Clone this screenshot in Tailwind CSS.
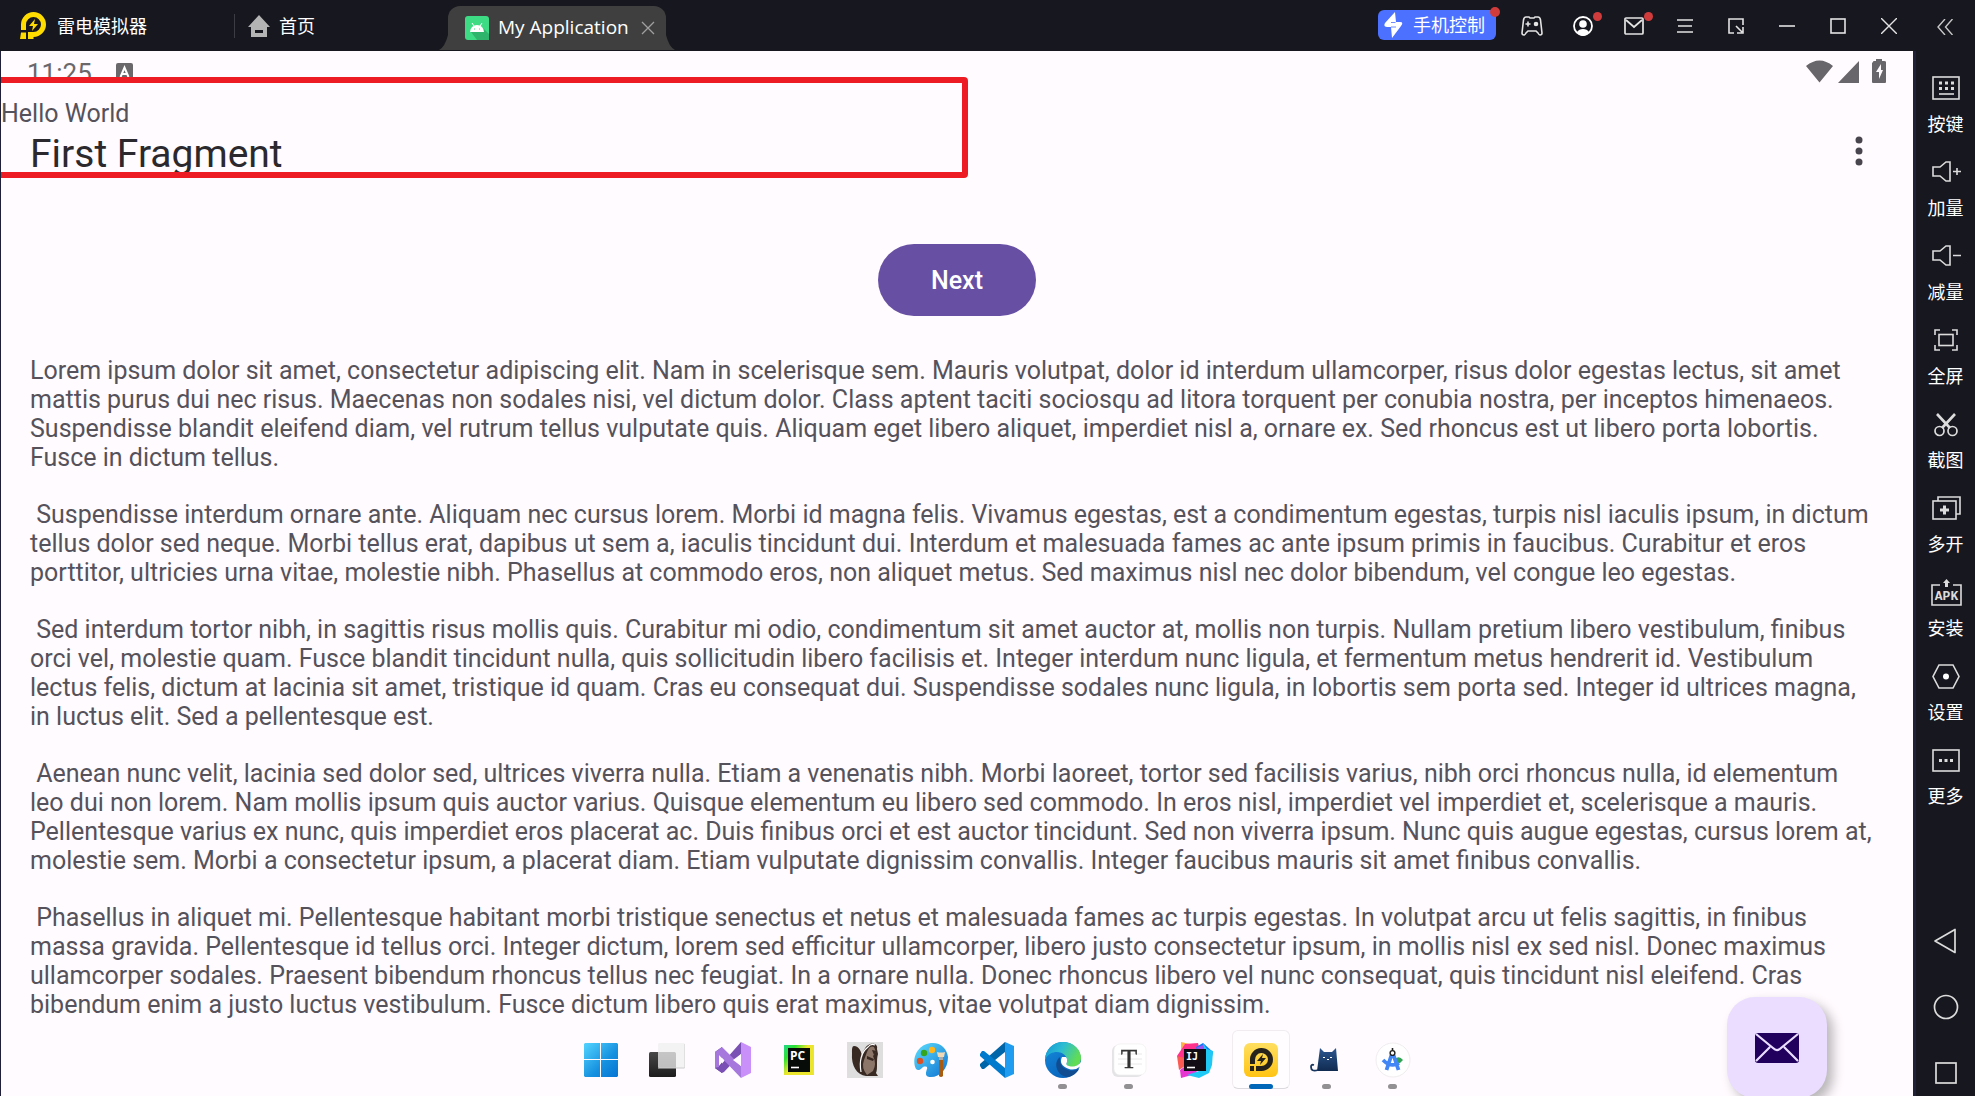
<!DOCTYPE html>
<html lang="zh-CN">
<head>
<meta charset="utf-8">
<title>My Application</title>
<script src="https://cdn.jsdelivr.net/npm/@tailwindcss/browser@4"></script>
</head>
<body class="flex h-screen flex-col overflow-hidden bg-[#17171f] font-['Open_Sans','Noto_Sans_CJK_SC',sans-serif] text-white">

<!-- Window title bar -->
<header class="flex h-[51px] shrink-0 items-center">
  <div class="flex w-[234px] items-center gap-[9px] pl-5">
    <svg class="h-7 w-7" viewBox="0 0 28 28"><path fill="#ffdc00" fill-rule="evenodd" d="M1 18V12.500a12.500 12.500 0 1 1 12.500 12.500V27H8v-7h5.500a7.500 7.500 0 1 0-7.500-7.500V18zM1 20.500h5V27H0z"/><path fill="#ffdc00" d="M15 7l-6 7h4l-1 5 6-7h-4z"/></svg>
    <span class="text-lg">雷电模拟器</span>
  </div>
  <a href="#" class="flex h-6 w-[205px] items-center gap-[9px] border-l border-[#3c3c44] pl-[13px]">
    <svg class="h-[22px] w-[22px]" viewBox="0 0 22 22" fill="#b4b4b4"><path d="M11 0l11 12h-3v10H3V12H0zM7 15v3h8v-3z" fill-rule="evenodd"/></svg>
    <span class="text-lg">首页</span>
  </a>
  <div class="flex h-[45px] items-center self-end">
    <svg class="h-full w-[9px]" viewBox="0 0 9 45"><path fill="#3f3f3f" d="M9 29v15H0q6-3 9-15z"/></svg>
    <div class="flex h-[44px] w-[218px] items-center self-start rounded-t-xl bg-[#3f3f3f] pb-px pl-[17px]">
      <svg class="h-6 w-6" viewBox="0 0 24 24"><rect width="24" height="24" rx="3" fill="#3ddc84"/><path d="M18 12l6 6v6H12l-6-8z" fill="#2fb56b"/><path d="M5 16a7 7 0 0 1 14 0z" fill="#fff"/><path d="M7 7l2 3M17 7l-2 3" stroke="#fff"/><path d="M9 13h1M14 13h1" stroke="#3ddc84"/></svg>
      <span class="ml-[9px] w-[143px] whitespace-nowrap text-[19px]">My Application</span>
      <button aria-label="关闭标签"><svg class="h-[14px] w-[14px]" viewBox="0 0 14 14"><path d="M1 1l12 12M13 1L1 13" stroke="#a0a0a0" stroke-width="1.3"/></svg></button>
    </div>
    <svg class="h-full w-[9px]" viewBox="0 0 9 45"><path fill="#3f3f3f" d="M0 29v15h9q-6-3-9-15z"/></svg>
  </div>

  <div class="ml-auto flex h-full items-center">
    <button class="relative -mt-px mr-[10px] flex h-[30px] w-[118px] items-center gap-[10px] rounded-md bg-[#4c70ff] pl-[6px]">
      <svg class="h-7 w-[19px]" viewBox="0 0 19 28" fill="#fff"><path d="M11 1L1 12q-2 4 2 4h4l1 11 9-12q3-4-1-4h-4z"/><path d="M7 11.500h4.500M7 16h5" stroke="#4c70ff" stroke-width=".8"/></svg>
      <span class="text-lg">手机控制</span>
      <span class="absolute -right-1 -top-[3px] h-[10px] w-[10px] rounded-full bg-[#d03c3c]"></span>
    </button>
    <button aria-label="手柄" class="grid h-full w-[51px] place-items-center">
      <svg class="h-[22px] w-[22px]" viewBox="0 0 22 22" fill="none" stroke="#e4e4e4" stroke-width="1.6"><path d="M5 2h3l1 1h4l1-1h3q2 0 2.500 3l1.500 13q0 2-2 2-1 0-2-2l-2-2H7l-2 2q-1 2-2 2-2 0-2-2L2.500 5Q3 2 5 2z"/><path d="M4.500 9h5M7 6.500v5"/><circle cx="15" cy="9" r="1.500" fill="#e4e4e4"/></svg>
    </button>
    <button aria-label="账户" class="relative grid h-full w-[51px] place-items-center">
      <svg class="h-[22px] w-[22px]" viewBox="0 0 22 22"><circle cx="11" cy="11" r="9" fill="none" stroke="#fff" stroke-width="1.800"/><circle cx="11" cy="9" r="3.800" fill="#fff"/><path d="M5 17q2-3 6-3t6 3q-2 4-6 4t-6-4z" fill="#fff"/></svg>
      <span class="absolute right-[6px] top-3 h-[9px] w-[9px] rounded-full bg-[#d03c3c]"></span>
    </button>
    <button aria-label="消息" class="relative grid h-full w-[51px] place-items-center">
      <svg class="h-5 w-5" viewBox="0 0 20 20" fill="none" stroke="#e4e4e4" stroke-width="1.700"><rect x="1" y="2" width="18" height="16" rx="1"/><path d="M2 4l8 7 8-7"/></svg>
      <span class="absolute right-[6px] top-3 h-[9px] w-[9px] rounded-full bg-[#d03c3c]"></span>
    </button>
    <button aria-label="菜单" class="grid h-full w-[51px] place-items-center"><svg class="h-4 w-4" viewBox="0 0 16 16" stroke="#e4e4e4" stroke-width="1.500"><path d="M0 2h16M1 8h14M0 14h16"/></svg></button>
    <button aria-label="小窗" class="grid h-full w-[51px] place-items-center"><svg class="h-[18px] w-[18px]" viewBox="0 0 18 18" fill="none" stroke="#e4e4e4" stroke-width="1.600"><path d="M7 16H2V2h14v6M9 9l6 6M16 10v6h-6"/></svg></button>
    <button aria-label="最小化" class="grid h-full w-[51px] place-items-center"><svg class="h-4 w-4" viewBox="0 0 16 16" stroke="#e4e4e4" stroke-width="1.600"><path d="M0 8h16"/></svg></button>
    <button aria-label="最大化" class="grid h-full w-[51px] place-items-center"><svg class="h-4 w-4" viewBox="0 0 16 16" fill="none" stroke="#e4e4e4" stroke-width="1.600"><rect x="1" y="1" width="14" height="14"/></svg></button>
    <button aria-label="关闭" class="grid h-full w-[51px] place-items-center"><svg class="h-4 w-4" viewBox="0 0 16 16" stroke="#e4e4e4" stroke-width="1.400"><path d="M0 0l16 16M16 0L0 16"/></svg></button>
    <button aria-label="收起侧栏" class="grid h-full w-[61px] place-items-center"><svg class="mt-[2px] h-4 w-4" viewBox="0 0 16 16" fill="none" stroke="#c8c8c8" stroke-width="1.400"><path d="M8 0L1 8l7 8M15.500 0l-7 8 7 8"/></svg></button>
  </div>
</header>

<div class="flex min-h-0 flex-1">
  <!-- Android screen -->
  <main class="relative min-w-0 flex-1 overflow-hidden border-l border-[#1f1f3a] bg-[#fffbfe] font-['Roboto',sans-serif] text-[#55525b]">
    <div class="flex h-8 items-start justify-between overflow-hidden pl-[26px] pr-[26px] pt-2">
      <div class="flex gap-[24px] text-[#6b686c]">
        <span class="text-[26px] leading-7">11:25</span>
        <svg class="mt-1 h-5 w-[17px]" viewBox="0 0 17 20"><rect width="17" height="20" rx="2" fill="#6b686c"/><path d="M4.500 14L8.500 4.500l4 9.500M6 11h5" fill="none" stroke="#fff" stroke-width="2"/></svg>
      </div>
      <div class="flex h-6 items-end" role="img" aria-label="Wi-Fi、信号、电池">
        <svg class="h-6 w-[81px]" viewBox="0 0 81 24" fill="#69666b"><path d="M0 7Q13.500-4 27 7L13.500 23.500zM53 2v22H32zM67 3q0-1 1-1h2V0h6v2h2q2 0 2 1v20q0 1-1 1H67q-1 0-1-1V4z"/><path d="M75 5l-5 8h3v7l4-9h-2z" fill="#fffbfe"/></svg>
      </div>
    </div>

    <div class="pt-4">
      <p class="text-[25px] leading-[29px]">Hello World</p>
      <div class="mt-1 flex h-11 justify-between overflow-hidden pl-[29px] pr-[42px]">
        <h1 class="text-[39px] leading-[44px] text-[#2b292e]">First Fragment</h1>
        <button aria-label="More options" class="-mt-2 self-start pt-3"><svg class="h-[30px] w-6" viewBox="0 0 24 30" fill="#49454f"><circle cx="12" cy="4" r="3.500"/><circle cx="12" cy="15" r="3.500"/><circle cx="12" cy="26" r="3.500"/></svg></button>
      </div>
    </div>
    <div class="absolute -left-2 top-[26px] h-[101px] w-[975px] rounded-sm border-6 border-[#ed1c24]"></div>

    <div class="mt-17 flex justify-center">
      <button class="h-[72px] w-[158px] rounded-full bg-[#6750a4] pt-[2px] text-[25px] font-medium text-white">Next</button>
    </div>

    <article class="mt-[40px] flex flex-col gap-[28px] whitespace-pre pl-[29px] text-[25px] leading-[29px]"><p>Lorem ipsum dolor sit amet, consectetur adipiscing elit. Nam in scelerisque sem. Mauris volutpat, dolor id interdum ullamcorper, risus dolor egestas lectus, sit amet
mattis purus dui nec risus. Maecenas non sodales nisi, vel dictum dolor. Class aptent taciti sociosqu ad litora torquent per conubia nostra, per inceptos himenaeos.
Suspendisse blandit eleifend diam, vel rutrum tellus vulputate quis. Aliquam eget libero aliquet, imperdiet nisl a, ornare ex. Sed rhoncus est ut libero porta lobortis.
Fusce in dictum tellus.</p><p> Suspendisse interdum ornare ante. Aliquam nec cursus lorem. Morbi id magna felis. Vivamus egestas, est a condimentum egestas, turpis nisl iaculis ipsum, in dictum
tellus dolor sed neque. Morbi tellus erat, dapibus ut sem a, iaculis tincidunt dui. Interdum et malesuada fames ac ante ipsum primis in faucibus. Curabitur et eros
porttitor, ultricies urna vitae, molestie nibh. Phasellus at commodo eros, non aliquet metus. Sed maximus nisl nec dolor bibendum, vel congue leo egestas.</p><p> Sed interdum tortor nibh, in sagittis risus mollis quis. Curabitur mi odio, condimentum sit amet auctor at, mollis non turpis. Nullam pretium libero vestibulum, finibus
orci vel, molestie quam. Fusce blandit tincidunt nulla, quis sollicitudin libero facilisis et. Integer interdum nunc ligula, et fermentum metus hendrerit id. Vestibulum
lectus felis, dictum at lacinia sit amet, tristique id quam. Cras eu consequat dui. Suspendisse sodales nunc ligula, in lobortis sem porta sed. Integer id ultrices magna,
in luctus elit. Sed a pellentesque est.</p><p> Aenean nunc velit, lacinia sed dolor sed, ultrices viverra nulla. Etiam a venenatis nibh. Morbi laoreet, tortor sed facilisis varius, nibh orci rhoncus nulla, id elementum
leo dui non lorem. Nam mollis ipsum quis auctor varius. Quisque elementum eu libero sed commodo. In eros nisl, imperdiet vel imperdiet et, scelerisque a mauris.
Pellentesque varius ex nunc, quis imperdiet eros placerat ac. Duis finibus orci et est auctor tincidunt. Sed non viverra ipsum. Nunc quis augue egestas, cursus lorem at,
molestie sem. Morbi a consectetur ipsum, a placerat diam. Etiam vulputate dignissim convallis. Integer faucibus mauris sit amet finibus convallis.</p><p> Phasellus in aliquet mi. Pellentesque habitant morbi tristique senectus et netus et malesuada fames ac turpis egestas. In volutpat arcu ut felis sagittis, in finibus
massa gravida. Pellentesque id tellus orci. Integer dictum, lorem sed efficitur ullamcorper, libero justo consectetur ipsum, in mollis nisl ex sed nisl. Donec maximus
ullamcorper sodales. Praesent bibendum rhoncus tellus nec feugiat. In a ornare nulla. Donec rhoncus libero vel nunc consequat, quis tincidunt nisl eleifend. Cras
bibendum enim a justo luctus vestibulum. Fusce dictum libero quis erat maximus, vitae volutpat diam dignissim.</p></article>

    <button aria-label="Mail" class="absolute -bottom-[2px] right-[86px] grid h-[101px] w-[100px] place-items-center rounded-[28px] bg-[#eaddff] shadow-[6px_6px_12px_rgba(0,0,0,0.28)]">
      <svg class="h-[30px] w-11" viewBox="0 0 44 30"><rect width="44" height="30" rx="3" fill="#21005d"/><path d="M1 1l17 14q4 4 8 0L43 1M1 28l14-14M43 28L29 14" fill="none" stroke="#eaddff" stroke-width="2.200"/></svg>
    </button>
  </main>

  <!-- Emulator tools -->
  <aside class="flex w-[62px] shrink-0 flex-col items-center border-l-3 border-[#1f1f38] bg-[#17171f] pt-[21px] text-lg">
    <button class="flex h-[84px] flex-col items-center gap-2 leading-6"><svg class="h-8 w-8" viewBox="0 0 32 32" fill="none" stroke="#dcdcdc" stroke-width="1.600"><rect x="3" y="5" width="26" height="22"/><path d="M9 11h3M15 11h3M21 11h3M9 16.500h3M15 16.500h3M21 16.500h3" stroke-width="3"/><path d="M9 22h15"/></svg>按键</button>
    <button class="flex h-[84px] flex-col items-center gap-2 leading-6"><svg class="h-8 w-8" viewBox="0 0 32 32" fill="none" stroke="#dcdcdc" stroke-width="1.600"><path d="M3 11h7l6-5h4v19h-4l-6-5H3zM23 15.500h8M27 12v7"/></svg>加量</button>
    <button class="flex h-[84px] flex-col items-center gap-2 leading-6"><svg class="h-8 w-8" viewBox="0 0 32 32" fill="none" stroke="#dcdcdc" stroke-width="1.600"><path d="M3 11h7l6-5h4v19h-4l-6-5H3zM23 15.500h8"/></svg>减量</button>
    <button class="flex h-[84px] flex-col items-center gap-2 leading-6"><svg class="h-8 w-8" viewBox="0 0 32 32" fill="none" stroke="#dcdcdc" stroke-width="1.600"><path d="M5 11V6h5M22 6h5v5M27 21v5h-5M10 26H5v-5"/><rect x="9" y="10.500" width="14" height="11"/></svg>全屏</button>
    <button class="flex h-[84px] flex-col items-center gap-2 leading-6"><svg class="h-8 w-8" viewBox="0 0 32 32" fill="none" stroke="#dcdcdc" stroke-width="1.700"><circle cx="9.500" cy="23" r="4.500"/><circle cx="22.500" cy="23" r="4.500"/><path d="M7 6l13 14M25 6L12 20" stroke-width="2.600"/></svg>截图</button>
    <button class="flex h-[84px] flex-col items-center gap-2 leading-6"><svg class="h-8 w-8" viewBox="0 0 32 32" fill="none" stroke="#dcdcdc" stroke-width="1.600"><path d="M8 9V5h22v17h-4"/><rect x="3" y="9" width="23" height="18"/><path d="M10 18h9M14.500 13.500v9" stroke-width="3"/></svg>多开</button>
    <button class="flex h-[84px] flex-col items-center gap-2 leading-6"><svg class="h-8 w-8" viewBox="0 0 32 32" fill="none" stroke="#dcdcdc" stroke-width="1.600"><path d="M10 9H2v20h29V9h-8"/><path d="M16.500 11V5" stroke-width="3"/><path d="M13 7l3.500-4L20 7z" fill="#dcdcdc" stroke="none"/><text x="16.500" y="24" text-anchor="middle" font-family="Liberation Mono" font-weight="bold" font-size="13" fill="#dcdcdc" stroke="none">APK</text></svg>安装</button>
    <button class="flex h-[84px] flex-col items-center gap-2 leading-6"><svg class="h-8 w-8" viewBox="0 0 32 32" fill="none" stroke="#dcdcdc" stroke-width="1.600"><path d="M9 5h14l6 11.500-6 11.500H9L3 16.500z"/><circle cx="16" cy="16.500" r="3" fill="#fff" stroke="none"/></svg>设置</button>
    <button class="flex h-[84px] flex-col items-center gap-2 leading-6"><svg class="h-8 w-8" viewBox="0 0 32 32" fill="none" stroke="#dcdcdc" stroke-width="1.600"><rect x="3" y="6" width="26" height="21"/><path d="M9 16.500h3M14.500 16.500h3M20 16.500h3" stroke-width="3"/></svg>更多</button>
    <nav class="mt-auto flex flex-col gap-5">
      <button aria-label="返回" class="grid h-[46px] w-[46px] place-items-center"><svg class="h-[26px] w-[26px]" viewBox="0 0 26 26" fill="none" stroke="#dcdcdc" stroke-width="1.700"><path d="M22 1.500v23L2 13z" stroke-linejoin="round"/></svg></button>
      <button aria-label="主页" class="grid h-[46px] w-[46px] place-items-center"><svg class="h-[26px] w-[26px]" viewBox="0 0 26 26" fill="none" stroke="#dcdcdc" stroke-width="1.700"><circle cx="13" cy="13" r="11.500"/></svg></button>
      <button aria-label="最近任务" class="grid h-[46px] w-[46px] place-items-center"><svg class="h-[22px] w-[22px]" viewBox="0 0 22 22" fill="none" stroke="#dcdcdc" stroke-width="1.700"><rect x="1" y="1" width="20" height="20"/></svg></button>
    </nav>
  </aside>
</div>

<!-- Desktop dock laid over the window -->
<nav aria-label="任务栏" class="fixed inset-x-0 bottom-[7px] flex justify-center gap-2 pl-[18px]">
  <button aria-label="开始" class="grid h-[59px] w-[58px] place-items-center"><svg class="h-9 w-9" viewBox="0 0 36 36"><defs><linearGradient id="w" x1="0" y1="0" x2="1" y2="1"><stop stop-color="#54d4ff"/><stop offset=".6" stop-color="#1590df"/><stop offset="1" stop-color="#0674d4"/></linearGradient></defs><path fill="url(#w)" d="M2 1h15v16H1V2zM18 1h16l1 1v15H18zM1 18h16v17H2l-1-1zM18 18h17v16l-1 1H18z"/></svg></button>
  <button aria-label="任务视图" class="grid h-[59px] w-[58px] place-items-center"><svg class="h-9 w-9" viewBox="0 0 36 36"><defs><linearGradient id="tv" x1="0" y1="0" x2="0" y2="1"><stop stop-color="#484848"/><stop offset="1" stop-color="#1c1c1c"/></linearGradient></defs><rect y="10" width="27" height="25" rx="1.500" fill="url(#tv)"/><rect x="9" y="1" width="27" height="25" rx="1.500" fill="#f0f0f0" fill-opacity=".75"/><path d="M9 26h26q1 0 1-1V2" fill="none" stroke="#ccc"/></svg></button>
  <button aria-label="Visual Studio" class="grid h-[59px] w-[58px] place-items-center"><svg class="h-9 w-9" viewBox="0 0 36 36"><path fill="#63419a" d="M0 10l7-5v26l-7-5z"/><path fill="#7b50b5" d="M0 26l4-1L26 0v12L9 30l-2 1z"/><path fill="#a678de" d="M0 10l7-5 19 19v12L4 13v12l-4 1z"/><path fill="#fffbfe" d="M4 13l5 5-5 6zM18 18l8-6v12z"/><path fill="#c890f8" d="M26 0l10 5v26l-10 5z"/></svg></button>
  <button aria-label="PyCharm" class="grid h-[59px] w-[58px] place-items-center"><svg class="h-[30px] w-[30px]" viewBox="0 0 30 30"><defs><linearGradient id="pc" x1="0" y1="0" x2=".5" y2=".4"><stop stop-color="#21d789"/><stop offset=".5" stop-color="#2fe02f"/><stop offset="1" stop-color="#ebe52d"/></linearGradient></defs><rect width="30" height="30" fill="url(#pc)"/><rect x="4" y="3" width="22" height="24" fill="#080c08"/><text x="6" y="15" font-family="Open Sans" font-weight="bold" font-size="12" fill="#fff">PC</text><path d="M7 22.500h8" stroke="#fff" stroke-width="1.600"/></svg></button>
  <button aria-label="DBeaver" class="grid h-[59px] w-[58px] place-items-center"><svg class="h-9 w-9" viewBox="0 0 36 36"><path fill="#dedede" d="M0 0h36v36H0z"/><path fill="#382923" d="M7 4c5 0 8 6 8 12 1-7 3-12 8-14 5-1 8 1 7 5l1 5c-2 6 0 15-2 19l2 3H19C10 33 4 24 5 11c0-4 0-7 2-7z"/><path fill="#8c7569" d="M20 10q3-7 7-5l2 5-3 4q4 8 0 15l-6 4q-6-7-3-15z"/><path d="M14 30q-3-17 7-25 3-4 7-2" fill="none" stroke="#fff" stroke-width="1.200"/><path fill="#382923" d="M20 14l7 3-1 2-6-2zM25 8l5 1-3 4z"/></svg></button>
  <button aria-label="画图" class="grid h-[59px] w-[58px] place-items-center"><svg class="h-9 w-9" viewBox="0 0 36 36"><defs><linearGradient id="pa" x1="0" y1="0" x2="1" y2="1"><stop stop-color="#5fe0ff"/><stop offset="1" stop-color="#0d70d0"/></linearGradient></defs><path fill="url(#pa)" d="M20 1c8 0 14 6 15 14 0 12-8 20-17 20-7 0-5-5-4-8s-3-3-5-1-4 3-6 1C-2 18 4 1 20 1z"/><circle cx="11" cy="11" r="3.200" fill="#36a51e"/><circle cx="19" cy="8" r="3.200" fill="#ffb51b"/><circle cx="7" cy="19" r="3.200" fill="#dc5224"/><circle cx="19.500" cy="20" r="2.300" fill="#fff"/><path fill="#a75c12" d="M26 16h4v18q-2 2-4 0z"/><path fill="#f2d9b5" d="M24 10q4 1 8 0l-1 5h-6z"/><path fill="#aaa" d="M26 15h4v3h-4z"/></svg></button>
  <button aria-label="VS Code" class="grid h-[59px] w-[58px] place-items-center"><svg class="h-9 w-9" viewBox="0 0 36 36"><path fill="#0065a9" d="M1 24l2 3h2L26 10V0L1 22z"/><path fill="#007acc" d="M1 12l2-3h2l21 17v10L1 14z"/><path fill="#1f9cf0" d="M26 0l9 4v28l-9 4z"/></svg></button>
  <button aria-label="Edge" class="relative grid h-[59px] w-[58px] place-items-center"><svg class="h-9 w-9" viewBox="0 0 36 36"><defs><linearGradient id="e1" x1="0" y1="0" x2="1" y2=".4"><stop stop-color="#1496d6"/><stop offset=".5" stop-color="#2dbdd2"/><stop offset="1" stop-color="#61dc55"/></linearGradient><linearGradient id="e2" x1="0" y1="0" x2=".6" y2="1"><stop stop-color="#168ddd"/><stop offset="1" stop-color="#0862ba"/></linearGradient></defs><circle cx="18" cy="18" r="18" fill="url(#e2)"/><path fill="url(#e1)" d="M0 17C1 7 8 0 18 0c12 0 18 9 18 16 0 6-4 9-9 9-4 0-7-2-5-5 2-8-13-16-22-3z"/><path fill="#124c90" d="M15 15c-7 5-4 19 8 20 5-1 9-4 11-8-8 4-20 1-19-12z"/><path fill="#fffbfe" d="M17 15q-4 8 7 12 6 2 12-3v-4q-5 6-12 4-4-1-2-4 1-3-1-5z"/></svg><span class="absolute bottom-0 h-[5px] w-[9px] rounded-full bg-[#929092]"></span></button>
  <button aria-label="Typora" class="relative grid h-[59px] w-[58px] place-items-center"><svg class="h-9 w-9" viewBox="0 0 36 36"><rect x="1" y="3" width="31" height="32" rx="6" fill="#e4e3e5"/><rect x="3" y="2" width="32" height="31" rx="6" fill="#fff" stroke="#ececec" stroke-width=".6"/><path d="M7 12h24M7 17h24M7 22h24" stroke="#e8e8e8"/><text x="18" y="26" text-anchor="middle" font-family="Liberation Serif" font-size="27" fill="#333" stroke="#333" stroke-width=".4">T</text></svg><span class="absolute bottom-0 h-[5px] w-[9px] rounded-full bg-[#929092]"></span></button>
  <button aria-label="IntelliJ IDEA" class="grid h-[59px] w-[58px] place-items-center"><svg class="h-9 w-9" viewBox="0 0 36 36"><path fill="#ffb347" d="M4 0l9 2-2 13H0l4-6z"/><path fill="#ff318c" d="M8 2l13-1 2 8L7 23 0 14z"/><path fill="#fc5b54" d="M0 14l8 2v8l-6 4z"/><path fill="#e834d0" d="M3 28l7-5 12 8-18 5z"/><path fill="#087cfa" d="M19 5l7-4 10 9-4 18-8-5z"/><path fill="#20c8f5" d="M26 1l4 6 6 2-1 14-3 8-10 5-12-3 18-6z"/><path fill="#a050f0" d="M19 6l7-3 2 6z"/><rect x="7" y="7" width="22" height="22" fill="#120c14"/><text x="9" y="18" font-family="DejaVu Sans Mono" font-weight="bold" font-size="10" fill="#fff">IJ</text><path d="M10 25.500h8" stroke="#fff" stroke-width="1.600"/></svg></button>
  <button aria-label="雷电模拟器" class="relative grid h-[59px] w-[58px] place-items-center rounded-md border border-[#f0ecf0] border-b-[#dddadf] bg-[#fffdff]"><svg class="h-[34px] w-[34px]" viewBox="0 0 34 34"><defs><linearGradient id="ld" x1="0" y1="0" x2="0" y2="1"><stop stop-color="#ffdf60"/><stop offset="1" stop-color="#ffc414"/></linearGradient></defs><rect width="34" height="34" rx="6" fill="url(#ld)"/><path fill="#26221c" d="M6 21v-4a11.500 11.500 0 1 1 11.500 11H12v-5h5.500a6.500 6.500 0 1 0-6.500-6v4zM6 23h4v5H6z"/><path fill="#26221c" d="M19 11l-6 7h4l-1 4 6-7h-4z"/></svg><span class="absolute -bottom-px h-[5px] w-6 rounded-full bg-[#0067b8]"></span></button>
  <button aria-label="Clash" class="relative grid h-[59px] w-[58px] place-items-center"><svg class="h-9 w-9" viewBox="0 0 36 36"><defs><linearGradient id="ct" x1="0" y1="0" x2="0" y2="1"><stop stop-color="#2c5790"/><stop offset="1" stop-color="#102b50"/></linearGradient></defs><path fill="url(#ct)" d="M11 6l4 4h8l4-4 2 23H8z"/><path d="M9 28q-7 2-7-3 0-3 3-2" fill="none" stroke="#18365f" stroke-width="1.800"/><path d="M14 15.500h2M21 15.500h2M18 17.500h2" stroke="#fff"/></svg><span class="absolute bottom-0 h-[5px] w-[9px] rounded-full bg-[#929092]"></span></button>
  <button aria-label="Android Studio" class="relative grid h-[59px] w-[58px] place-items-center"><svg class="h-9 w-9" viewBox="0 0 36 36"><circle cx="18" cy="18" r="17" fill="#fff" stroke="#e8e5e8" stroke-width=".7"/><path fill="#30a354" d="M20 17q4-4 8 1l-3 3h-5z"/><path d="M16.500 13l-5 15M18.500 13l5 15M8 18q8 8 16 3" fill="none" stroke="#4285f4" stroke-width="3.800"/><circle cx="17.500" cy="11" r="2.400" fill="#fff" stroke="#222" stroke-width="1.400"/><path d="M17.500 6v3" stroke="#222" stroke-width="1.600"/></svg><span class="absolute bottom-0 h-[5px] w-[9px] rounded-full bg-[#929092]"></span></button>
</nav>
</body>
</html>
